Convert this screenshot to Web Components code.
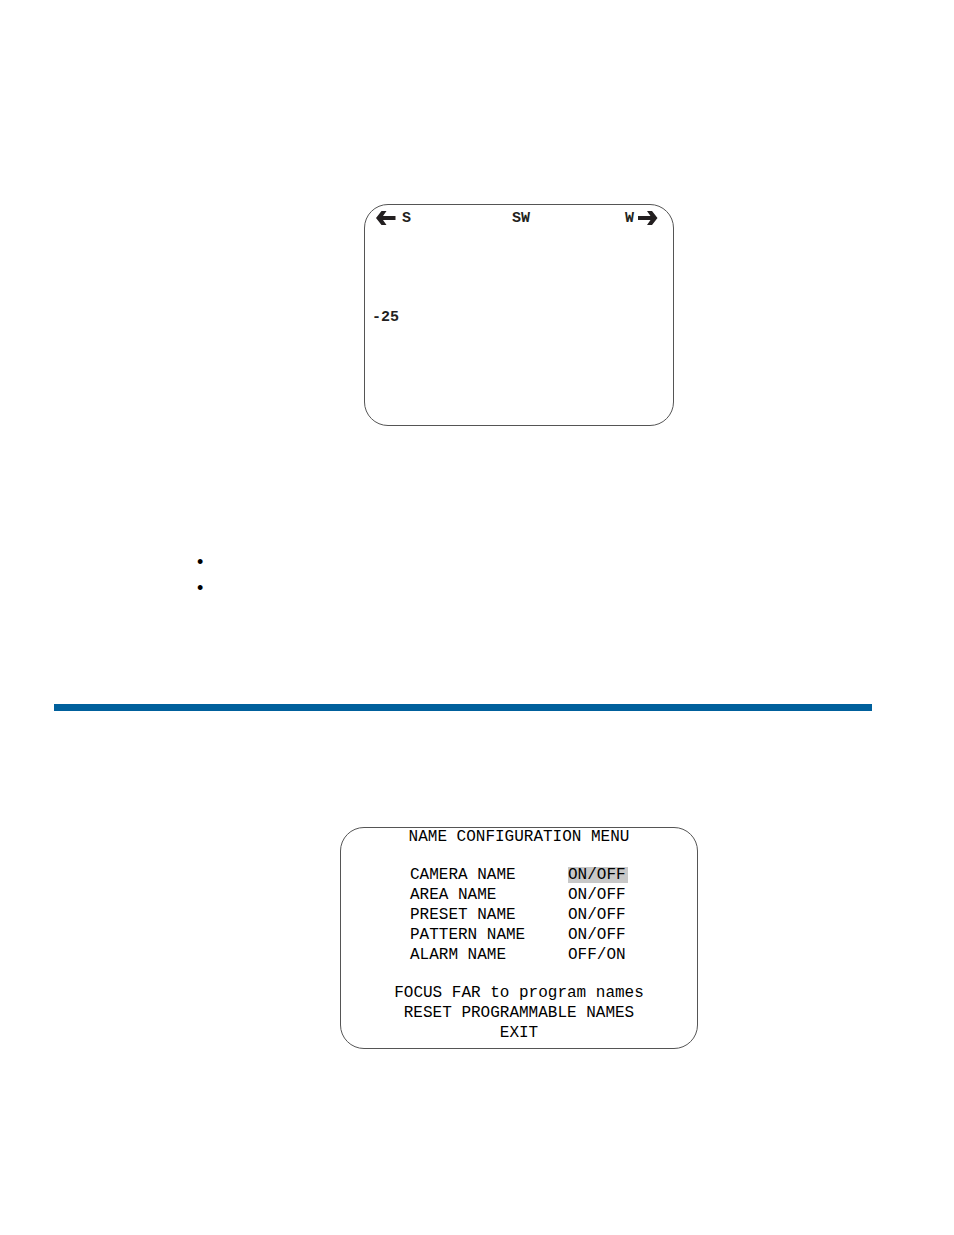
<!DOCTYPE html>
<html lang="en">
<head>
<meta charset="utf-8">
<title>Name Configuration Menu</title>
<style>
body { margin: 0; background: #fff; color: #000; font-family: "Liberation Mono", monospace; }
</style>
</head>
<body>
<manual-page>
  <screen-frame class="compass"><compass-view></compass-view></screen-frame>
  <bullet-list></bullet-list>
  <section-rule></section-rule>
  <screen-frame class="menu"><name-menu></name-menu></screen-frame>
</manual-page>

<script>
function define(name, html) {
  const template = document.createElement('template');
  template.innerHTML = html;
  customElements.define(name, class extends HTMLElement {
    constructor() {
      super();
      this.attachShadow({ mode: 'open' }).append(template.content.cloneNode(true));
    }
  });
}

define('manual-page', `
  <style>
    :host { display: flex; flex-direction: column; padding: 204px 82px 186px 54px; }
    ::slotted(screen-frame), ::slotted(bullet-list) { margin-left: 112px; }
    ::slotted(.compass) { --frame-width: 310px; }
    ::slotted(.menu) { --frame-width: 358px; }
    ::slotted(bullet-list) { margin-top: 123px; }
    ::slotted(section-rule) { margin: 103px 0 116px; }
  </style>
  <slot></slot>`);

define('screen-frame', `
  <style>
    :host { display: flex; justify-content: center; }
    .frame { box-sizing: border-box; width: var(--frame-width); max-width: 100%; min-height: 222px; border: 1px solid #555; border-radius: 24px; }
  </style>
  <div class="frame"><slot></slot></div>`);

define('compass-view', `
  <style>
    :host { display: block; padding: 4px 15px 96px 7px; color: #231f20; font-size: 15px; font-weight: bold; line-height: 20px; }
    .heading { display: grid; grid-template-columns: 1fr auto 1fr; align-items: center; padding-left: 4px; }
    .side { display: flex; align-items: center; gap: 6px; }
    .right { justify-content: flex-end; gap: 4px; }
    .centre { padding-left: 8px; }
    svg { display: block; width: 20px; height: 16px; fill: currentColor; }
    .tilt { margin: 79px 0 0; }
  </style>
  <div class="heading">
    <div class="side"><svg viewBox="0 0 20 16" aria-hidden="true"><path d="M0 7 5.500 0H10.500L7 5H19.500v4H7L10.500 14H5.500z"/></svg><span>S</span></div>
    <span class="centre">SW</span>
    <div class="side right"><span>W</span><svg viewBox="0 0 20 16" aria-hidden="true"><path d="M19.500 7 14 0H9L12.500 5H0v4h12.500L9 14H14z"/></svg></div>
  </div>
  <p class="tilt">-25</p>`);

define('bullet-list', `
  <style>
    :host { display: block; font-family: "Liberation Sans", sans-serif; font-size: 18px; line-height: 26px; }
    ul { list-style: none; margin: 0; padding: 0 0 0 31px; }
  </style>
  <ul><li>•</li><li>•</li></ul>`);

define('section-rule', `
  <style>
    :host { display: block; }
    hr { height: 7px; margin: 0; border: 0; background: #00609c; }
  </style>
  <hr>`);

define('name-menu', `
  <style>
    :host { display: flex; flex-direction: column; align-items: center; gap: 18px; font-size: 16px; line-height: 20px; text-align: center; }
    h2, p { margin: 0; font: inherit; }
    h2 { padding-bottom: 1px; line-height: 18px; }
    table { border-collapse: collapse; text-align: left; }
    th, td { padding: 0; font-weight: normal; }
    th { width: 158px; }
    td { width: 60px; height: 20px; }
    mark { display: block; line-height: 16px; background: #c8c8c8; color: inherit; }
  </style>
  <h2>NAME CONFIGURATION MENU</h2>
  <table>
    <tr><th scope="row">CAMERA NAME</th><td><mark>ON/OFF</mark></td></tr>
    <tr><th scope="row">AREA NAME</th><td>ON/OFF</td></tr>
    <tr><th scope="row">PRESET NAME</th><td>ON/OFF</td></tr>
    <tr><th scope="row">PATTERN NAME</th><td>ON/OFF</td></tr>
    <tr><th scope="row">ALARM NAME</th><td>OFF/ON</td></tr>
  </table>
  <div>
    <p>FOCUS FAR to program names</p>
    <p>RESET PROGRAMMABLE NAMES</p>
    <p>EXIT</p>
  </div>`);
</script>
</body>
</html>
